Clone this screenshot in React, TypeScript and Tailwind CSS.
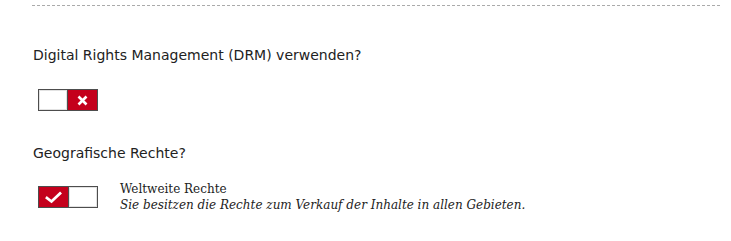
import React from "react";

function Toggle({ on }: { on: boolean }) {
  const red = (
    <div className="w-[30px] h-full bg-[#c4001c] flex items-center justify-center">
      {on ? (
        <svg width="17" height="13" viewBox="0 0 17 13">
          <path d="M2 7 L6.5 10.5 L15 2.5" fill="none" stroke="#fff" strokeWidth="2.8" strokeLinecap="square" />
        </svg>
      ) : (
        <svg width="11" height="11" viewBox="0 0 11 11">
          <path d="M1.5 1.5 L9.5 9.5 M9.5 1.5 L1.5 9.5" fill="none" stroke="#fff" strokeWidth="2.6" />
        </svg>
      )}
    </div>
  );
  const white = <div className="w-[28px] h-full bg-white border border-[#e2e2e2]" />;
  return (
    <div className="flex w-[60px] h-[22px] border border-[#4d4d4d] bg-[#4d4d4d] gap-px">
      {on ? red : white}
      {on ? white : red}
    </div>
  );
}

export default function App() {
  return (
    <div className="w-[731px] h-[241px] bg-white pl-[32px] pr-[10px] pt-[5px] text-[#222222]">
      <div className="h-px bg-[repeating-linear-gradient(90deg,#aaaaaa_0_3px,transparent_3px_5px)] shadow-[0_2px_4px_rgba(0,0,0,0.04)]" />
      <div
        className="mt-[39px] pl-px text-[14px] leading-[20px]"
        style={{ fontFamily: '"DejaVu Sans", sans-serif' }}
      >
        Digital Rights Management (DRM) verwenden?
      </div>
      <div className="mt-[24px] pl-[6px]">
        <Toggle on={false} />
      </div>
      <div
        className="mt-[32px] pl-px text-[14px] leading-[20px]"
        style={{ fontFamily: '"DejaVu Sans", sans-serif' }}
      >
        Geografische Rechte?
      </div>
      <div className="mt-[23px] pl-[6px] flex items-start gap-[22px]">
        <Toggle on={true} />
        <div className="-mt-[5px] text-[12px] leading-[16px]" style={{ fontFamily: '"DejaVu Serif", serif' }}>
          <div>Weltweite Rechte</div>
          <div className="italic">Sie besitzen die Rechte zum Verkauf der Inhalte in allen Gebieten.</div>
        </div>
      </div>
    </div>
  );
}
